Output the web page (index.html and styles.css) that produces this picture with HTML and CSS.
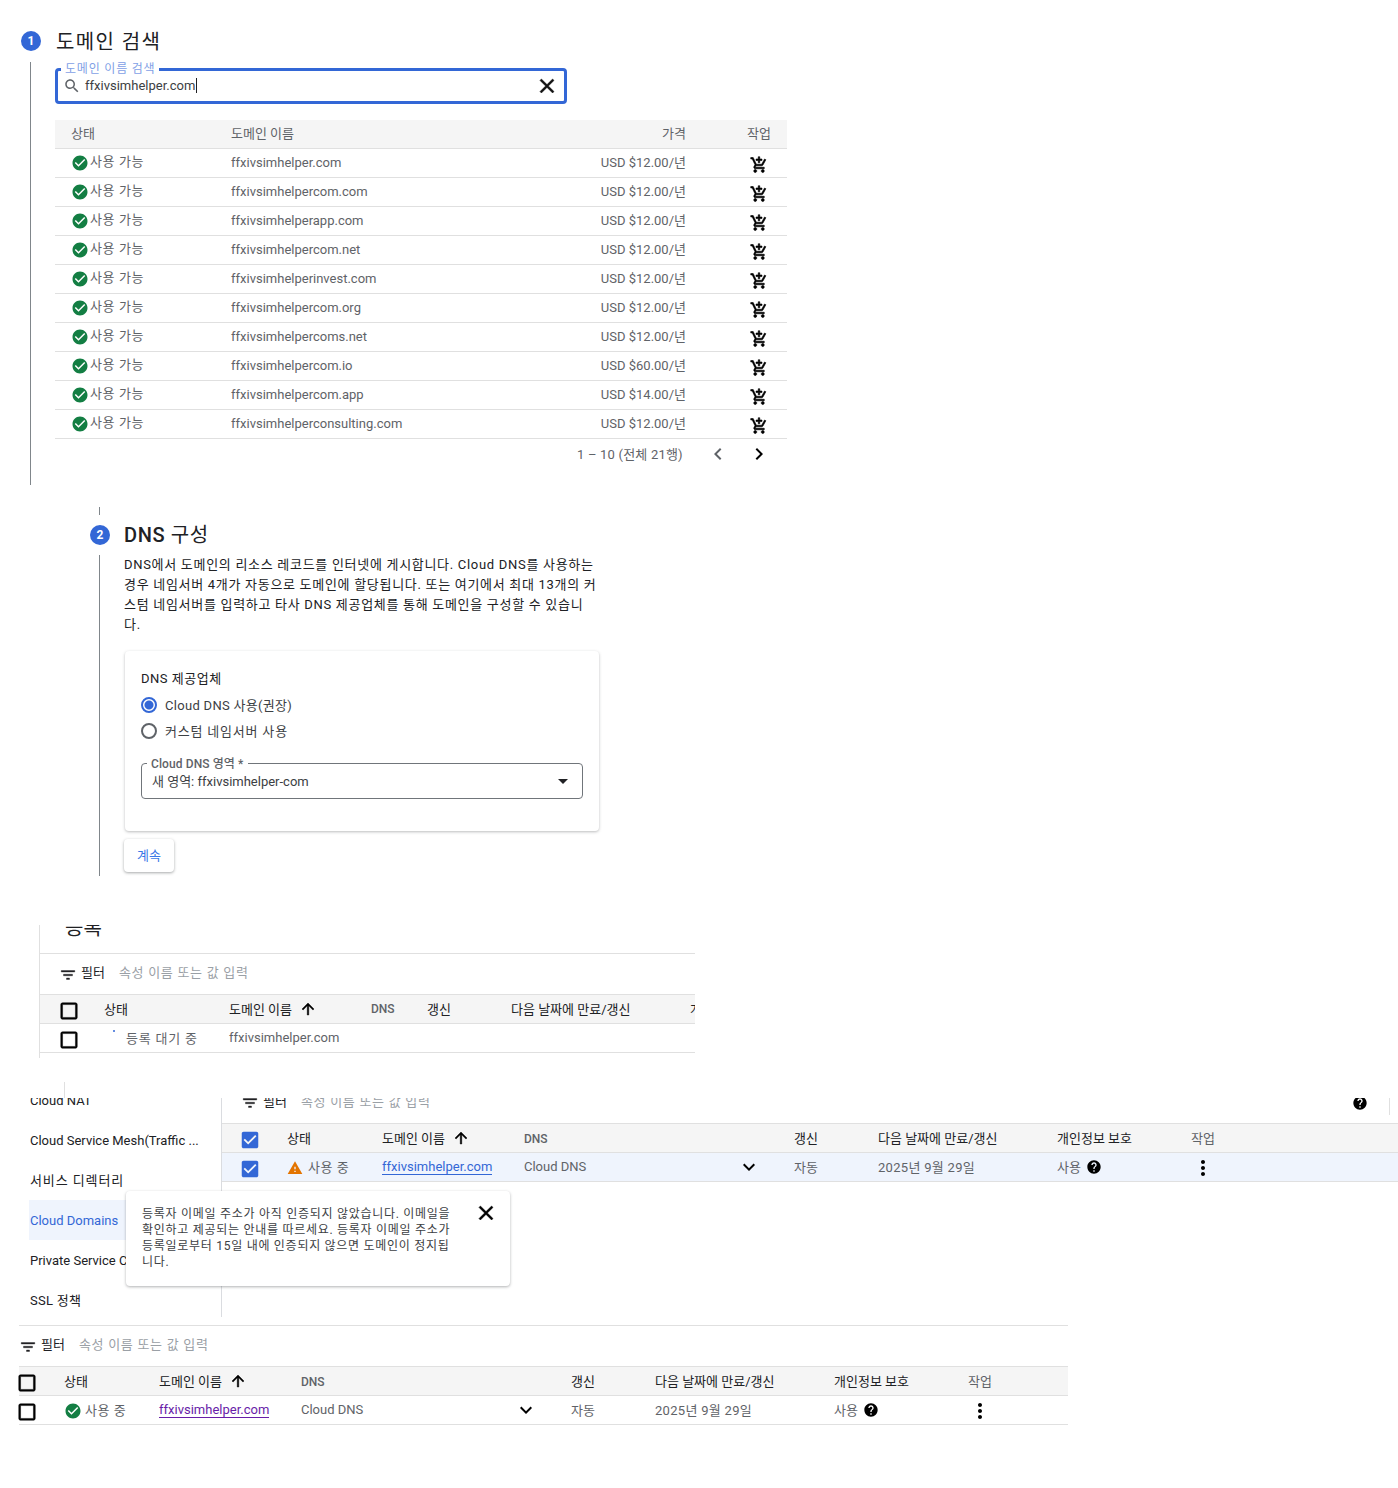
FILE: index.html
```html
<!DOCTYPE html>
<html lang="ko">
<head>
    <meta charset="UTF-8">
    <title>Cloud Domains</title>
    <link rel="stylesheet" href="styles.css">
</head>
<body>
    <svg class="sprites" xmlns="http://www.w3.org/2000/svg">
        <symbol id="i-check-circle" viewBox="0 0 24 24"><path d="M12 2C6.48 2 2 6.48 2 12s4.48 10 10 10 10-4.48 10-10S17.52 2 12 2zm-2 15l-5-5 1.41-1.41L10 14.17l7.59-7.59L19 8l-9 9z"/></symbol>
        <symbol id="i-search" viewBox="0 0 24 24"><path d="M15.5 14h-.79l-.28-.27C15.41 12.59 16 11.11 16 9.5 16 5.91 13.09 3 9.5 3S3 5.91 3 9.5 5.91 16 9.5 16c1.61 0 3.09-.59 4.23-1.57l.27.28v.79l5 4.99L20.49 19l-4.99-5zm-6 0C7.01 14 5 11.99 5 9.5S7.01 5 9.5 5 14 7.01 14 9.5 11.99 14 9.5 14z"/></symbol>
        <symbol id="i-close" viewBox="0 0 24 24"><path d="M19 6.41L17.59 5 12 10.59 6.41 5 5 6.41 10.59 12 5 17.59 6.41 19 12 13.41 17.59 19 19 17.59 13.41 12z"/></symbol>
        <symbol id="i-cart" viewBox="0 0 24 24"><path d="M11 9h2V6h3V4h-3V1h-2v3H8v2h3v3zm-4 9c-1.1 0-1.99.9-1.99 2S5.9 22 7 22s2-.9 2-2-.9-2-2-2zm10 0c-1.1 0-1.99.9-1.99 2s.89 2 1.99 2 2-.9 2-2-.9-2-2-2zm-9.83-3.25l.03-.12.9-1.63h7.45c.75 0 1.41-.41 1.75-1.03l3.86-7.01L19.42 4h-.01l-1.1 2-2.76 5H8.53l-.13-.27L6.16 6l-.95-2-.94-2H1v2h2l3.6 7.59-1.35 2.45c-.16.28-.25.61-.25.96 0 1.1.9 2 2 2h12v-2H7.42c-.13 0-.25-.11-.25-.25z"/></symbol>
        <symbol id="i-left" viewBox="0 0 24 24"><path d="M15.41 7.41L14 6l-6 6 6 6 1.41-1.41L10.83 12z"/></symbol>
        <symbol id="i-right" viewBox="0 0 24 24"><path d="M10 6L8.59 7.41 13.17 12l-4.58 4.59L10 18l6-6z"/></symbol>
        <symbol id="i-filter" viewBox="0 0 24 24"><path d="M10 18h4v-2h-4v2zM3 6v2h18V6H3zm3 7h12v-2H6v2z"/></symbol>
        <symbol id="i-up" viewBox="0 0 24 24"><path d="M4 12l1.41 1.41L11 7.83V20h2V7.83l5.58 5.59L20 12l-8-8-8 8z"/></symbol>
        <symbol id="i-down" viewBox="0 0 24 24"><path d="M16.59 8.59L12 13.17 7.41 8.59 6 10l6 6 6-6z"/></symbol>
        <symbol id="i-more" viewBox="0 0 24 24"><path d="M12 8c1.1 0 2-.9 2-2s-.9-2-2-2-2 .9-2 2 .9 2 2 2zm0 2c-1.1 0-2 .9-2 2s.9 2 2 2 2-.9 2-2-.9-2-2-2zm0 6c-1.1 0-2 .9-2 2s.9 2 2 2 2-.9 2-2-.9-2-2-2z"/></symbol>
        <symbol id="i-help" viewBox="0 0 24 24"><path d="M12 2C6.48 2 2 6.48 2 12s4.48 10 10 10 10-4.48 10-10S17.52 2 12 2zm1 17h-2v-2h2v2zm2.07-7.75l-.9.92C13.45 12.9 13 13.5 13 15h-2v-.5c0-1.1.45-2.1 1.17-2.83l1.24-1.26c.37-.36.59-.86.59-1.41 0-1.1-.9-2-2-2s-2 .9-2 2H8c0-2.21 1.79-4 4-4s4 1.79 4 4c0 .88-.36 1.68-.93 2.25z"/></symbol>
        <symbol id="i-warning" viewBox="0 0 24 24"><path d="M1 21h22L12 2 1 21zm12-3h-2v-2h2v2zm0-4h-2v-4h2v4z"/></symbol>
        <symbol id="i-box" viewBox="0 0 24 24"><path d="M19 5v14H5V5h14m0-2H5c-1.1 0-2 .9-2 2v14c0 1.1.9 2 2 2h14c1.1 0 2-.9 2-2V5c0-1.1-.9-2-2-2z"/></symbol>
        <symbol id="i-box-on" viewBox="0 0 24 24"><path d="M19 3H5c-1.11 0-2 .9-2 2v14c0 1.1.89 2 2 2h14c1.11 0 2-.9 2-2V5c0-1.1-.89-2-2-2zm-9 14l-5-5 1.41-1.41L10 14.17l7.59-7.59L19 8l-9 9z"/></symbol>
    </svg>

    <!-- 1. 도메인 검색 -->
    <section class="step-search">
        <div class="step-head">
            <span class="badge">1</span>
            <h2 class="step-title title-wide">도메인 검색</h2>
        </div>
        <div class="step-body">
            <div class="search-box">
                <span class="search-label">도메인 이름 검색</span>
                <svg class="ico search-ico"><use href="#i-search"/></svg>
                <span class="search-value">ffxivsimhelper.com</span>
                <svg class="ico close-ico"><use href="#i-close"/></svg>
            </div>
            <div class="results">
                <div class="res-row res-head"><span>상태</span><span>도메인 이름</span><span class="price">가격</span><span class="res-action">작업</span></div>
                <div class="res-row"><span class="avail"><svg class="ico ok"><use href="#i-check-circle"/></svg>사용 가능</span><span>ffxivsimhelper.com</span><span class="price">USD $12.00/년</span><svg class="ico cart"><use href="#i-cart"/></svg></div>
                <div class="res-row"><span class="avail"><svg class="ico ok"><use href="#i-check-circle"/></svg>사용 가능</span><span>ffxivsimhelpercom.com</span><span class="price">USD $12.00/년</span><svg class="ico cart"><use href="#i-cart"/></svg></div>
                <div class="res-row"><span class="avail"><svg class="ico ok"><use href="#i-check-circle"/></svg>사용 가능</span><span>ffxivsimhelperapp.com</span><span class="price">USD $12.00/년</span><svg class="ico cart"><use href="#i-cart"/></svg></div>
                <div class="res-row"><span class="avail"><svg class="ico ok"><use href="#i-check-circle"/></svg>사용 가능</span><span>ffxivsimhelpercom.net</span><span class="price">USD $12.00/년</span><svg class="ico cart"><use href="#i-cart"/></svg></div>
                <div class="res-row"><span class="avail"><svg class="ico ok"><use href="#i-check-circle"/></svg>사용 가능</span><span>ffxivsimhelperinvest.com</span><span class="price">USD $12.00/년</span><svg class="ico cart"><use href="#i-cart"/></svg></div>
                <div class="res-row"><span class="avail"><svg class="ico ok"><use href="#i-check-circle"/></svg>사용 가능</span><span>ffxivsimhelpercom.org</span><span class="price">USD $12.00/년</span><svg class="ico cart"><use href="#i-cart"/></svg></div>
                <div class="res-row"><span class="avail"><svg class="ico ok"><use href="#i-check-circle"/></svg>사용 가능</span><span>ffxivsimhelpercoms.net</span><span class="price">USD $12.00/년</span><svg class="ico cart"><use href="#i-cart"/></svg></div>
                <div class="res-row"><span class="avail"><svg class="ico ok"><use href="#i-check-circle"/></svg>사용 가능</span><span>ffxivsimhelpercom.io</span><span class="price">USD $60.00/년</span><svg class="ico cart"><use href="#i-cart"/></svg></div>
                <div class="res-row"><span class="avail"><svg class="ico ok"><use href="#i-check-circle"/></svg>사용 가능</span><span>ffxivsimhelpercom.app</span><span class="price">USD $14.00/년</span><svg class="ico cart"><use href="#i-cart"/></svg></div>
                <div class="res-row"><span class="avail"><svg class="ico ok"><use href="#i-check-circle"/></svg>사용 가능</span><span>ffxivsimhelperconsulting.com</span><span class="price">USD $12.00/년</span><svg class="ico cart"><use href="#i-cart"/></svg></div>
                <div class="pager">
                    <span class="pager-text">1 – 10 (전체 21행)</span>
                    <svg class="ico pager-prev"><use href="#i-left"/></svg>
                    <svg class="ico pager-next"><use href="#i-right"/></svg>
                </div>
            </div>
        </div>
    </section>

    <!-- 2. DNS 구성 -->
    <section class="step-dns">
        <div class="tick"></div>
        <div class="step-head">
            <span class="badge">2</span>
            <h2 class="step-title"><span class="title-latin">DNS</span> 구성</h2>
        </div>
        <div class="step-body">
            <p class="dns-desc">DNS에서 도메인의 리소스 레코드를 인터넷에 게시합니다. Cloud DNS를 사용하는 경우 네임서버 4개가 자동으로 도메인에 할당됩니다. 또는 여기에서 최대 13개의 커스텀 네임서버를 입력하고 타사 DNS 제공업체를 통해 도메인을 구성할 수 있습니다.</p>
            <div class="dns-card">
                <div class="dns-label">DNS 제공업체</div>
                <div class="radio-row"><span class="radio radio-on"></span>Cloud DNS 사용(권장)</div>
                <div class="radio-row radio-custom"><span class="radio"></span>커스텀 네임서버 사용</div>
                <div class="zone-select">
                    <span class="zone-label">Cloud DNS 영역 *</span>
                    <span class="zone-value">새 영역: ffxivsimhelper-com</span>
                    <span class="caret"></span>
                </div>
            </div>
            <button class="continue">계속</button>
        </div>
    </section>

    <!-- 등록 대기 중 -->
    <section class="pending">
        <div class="pending-title"><span>등록</span></div>
        <div class="filter-bar">
            <svg class="ico filter-ico"><use href="#i-filter"/></svg>
            <span class="filter-name">필터</span>
            <span class="filter-hint">속성 이름 또는 값 입력</span>
        </div>
        <div class="pend-row pend-head">
            <svg class="ico box"><use href="#i-box"/></svg>
            <span>상태</span>
            <span class="sort-col">도메인 이름<svg class="ico sort-ico"><use href="#i-up"/></svg></span>
            <span class="col-dns">DNS</span>
            <span>갱신</span>
            <span>다음 날짜에 만료/갱신</span>
            <span>개인정보 보호</span>
        </div>
        <div class="pend-row">
            <svg class="ico box"><use href="#i-box"/></svg>
            <span class="pend-status"><i class="spin-dot"></i>등록 대기 중</span>
            <span class="cell-grey">ffxivsimhelper.com</span>
        </div>
    </section>

    <!-- 사이드 메뉴 + 경고 -->
    <section class="console">
        <div class="tick tick-console"></div>
        <div class="console-main">
            <nav class="side-nav">
                <a class="nav-item nav-first">Cloud NAT</a>
                <a class="nav-item">Cloud Service Mesh(Traffic ...</a>
                <a class="nav-item nav-ko">서비스 디렉터리</a>
                <a class="nav-item nav-active">Cloud Domains</a>
                <a class="nav-item">Private Service Connect</a>
                <a class="nav-item nav-ssl">SSL 정책</a>
            </nav>
            <div class="console-right">
                <div class="filter-bar filter-clipped">
                    <svg class="ico filter-ico"><use href="#i-filter"/></svg>
                    <span class="filter-name">필터</span>
                    <span class="filter-hint">속성 이름 또는 값 입력</span>
                    <svg class="ico help-top"><use href="#i-help"/></svg>
                    <span class="help-rule"></span>
                </div>
                <div class="dom-row dom-head dom-inset">
                    <svg class="ico box box-on"><use href="#i-box-on"/></svg>
                    <span>상태</span>
                    <span class="sort-col">도메인 이름<svg class="ico sort-ico"><use href="#i-up"/></svg></span>
                    <span class="col-dns">DNS</span>
                    <span>갱신</span>
                    <span>다음 날짜에 만료/갱신</span>
                    <span>개인정보 보호</span>
                    <span class="col-action">작업</span>
                </div>
                <div class="dom-row dom-inset dom-selected">
                    <svg class="ico box box-on"><use href="#i-box-on"/></svg>
                    <span class="use-status"><svg class="ico warn"><use href="#i-warning"/></svg>사용 중</span>
                    <a class="dom-link">ffxivsimhelper.com</a>
                    <span class="cell-dns">Cloud DNS<svg class="ico chev"><use href="#i-down"/></svg></span>
                    <span>자동</span>
                    <span class="date">2025년 9월 29일</span>
                    <span class="privacy">사용<svg class="ico help"><use href="#i-help"/></svg></span>
                    <svg class="ico more"><use href="#i-more"/></svg>
                </div>
            </div>
        </div>
        <div class="notice">
            <p>등록자 이메일 주소가 아직 인증되지 않았습니다. 이메일을 확인하고 제공되는 안내를 따르세요. 등록자 이메일 주소가 등록일로부터 15일 내에 인증되지 않으면 도메인이 정지됩니다.</p>
            <svg class="ico notice-close"><use href="#i-close"/></svg>
        </div>
    </section>

    <!-- 사용 중 -->
    <section class="active-list">
        <div class="filter-bar">
            <svg class="ico filter-ico"><use href="#i-filter"/></svg>
            <span class="filter-name">필터</span>
            <span class="filter-hint">속성 이름 또는 값 입력</span>
        </div>
        <div class="dom-row dom-head">
            <svg class="ico box"><use href="#i-box"/></svg>
            <span>상태</span>
            <span class="sort-col">도메인 이름<svg class="ico sort-ico"><use href="#i-up"/></svg></span>
            <span class="col-dns">DNS</span>
            <span>갱신</span>
            <span>다음 날짜에 만료/갱신</span>
            <span>개인정보 보호</span>
            <span class="col-action">작업</span>
        </div>
        <div class="dom-row">
            <svg class="ico box"><use href="#i-box"/></svg>
            <span class="use-status"><svg class="ico ok"><use href="#i-check-circle"/></svg>사용 중</span>
            <a class="dom-link dom-visited">ffxivsimhelper.com</a>
            <span class="cell-dns">Cloud DNS<svg class="ico chev"><use href="#i-down"/></svg></span>
            <span>자동</span>
            <span class="date">2025년 9월 29일</span>
            <span class="privacy">사용<svg class="ico help"><use href="#i-help"/></svg></span>
            <svg class="ico more"><use href="#i-more"/></svg>
        </div>
    </section>
</body>
</html>
```

FILE: styles.css
```css
* {
    box-sizing: border-box;
}
body {
    margin: 0;
    background-color: white;
    color: #202124;
    font-family: Roboto, "Noto Sans CJK KR", sans-serif;
    font-size: 13px;
}
.sprites {
    display: none;
}
.ico {
    display: block;
    flex: none;
    width: 24px;
    height: 24px;
    fill: currentColor;
}

/* steps */
.step-head {
    display: flex;
    align-items: center;
    gap: 15px;
}
.badge {
    width: 20px;
    height: 20px;
    border-radius: 50%;
    background-color: #3367d6;
    color: white;
    font-size: 12px;
    font-weight: 700;
    text-align: center;
    line-height: 20px;
}
.step-title {
    margin: 0;
    font-size: 20px;
    font-weight: 400;
    line-height: 30px;
    letter-spacing: 0.6px;
    color: #202124;
}
.title-wide {
    height: 30px;
    padding-top: 2px;
    line-height: 28px;
    letter-spacing: 1.4px;
}
.title-latin {
    font-weight: 500;
}
.tick {
    width: 1px;
    height: 8px;
    background-color: #80868b;
}

/* 1. search */
.step-search {
    height: 459px;
    margin-top: 26px;
    margin-left: 21px;
}
.step-search .step-body {
    height: 423px;
    margin-left: 9px;
    margin-top: 6px;
    padding-top: 6px;
    padding-left: 24px;
    border-left: 1px solid #80868b;
}
.search-box {
    position: relative;
    display: flex;
    align-items: center;
    width: 512px;
    height: 36px;
    padding: 0 7px 0 5px;
    border: 3px solid #3367d6;
    border-radius: 4px;
}
.search-label {
    position: absolute;
    top: -9px;
    left: 3px;
    padding: 0 4px;
    background-color: white;
    color: #7f9fe6;
    font-size: 12px;
    letter-spacing: 0.8px;
    line-height: 14px;
}
.search-ico {
    width: 18px;
    height: 18px;
    color: #5f6368;
}
.search-value {
    flex: 1;
    margin-left: 4px;
    margin-bottom: 2px;
    font-size: 13px;
    color: #3c4043;
}
.search-value::after {
    content: "";
    display: inline-block;
    width: 1px;
    height: 15px;
    margin-left: 1px;
    vertical-align: -3px;
    background-color: #202124;
}
.close-ico {
    margin-right: -2px;
    color: #111;
    stroke: currentColor;
    stroke-width: 0.5;
}
.results {
    width: 732px;
    margin-top: 16px;
}
.res-row {
    display: grid;
    grid-template-columns: 160px 1fr 120px 101px;
    align-items: center;
    height: 29px;
    padding-left: 16px;
    padding-bottom: 3px;
    border-bottom: 1px solid #e0e0e0;
    color: #5f6368;
}
.res-row:not(.res-head) > span:nth-child(2) {
    margin-top: 2px;
}
.res-head {
    background-color: #f5f5f5;
}
.price {
    text-align: right;
}
.res-action {
    text-align: right;
    padding-right: 16px;
}
.avail {
    display: flex;
    align-items: center;
    padding-bottom: 2px;
    letter-spacing: 0.6px;
}
.ok {
    width: 18px;
    height: 18px;
    color: #137e43;
}
.avail .ok {
    margin-top: 5px;
    margin-right: 1px;
}
.cart {
    width: 18px;
    height: 18px;
    margin-left: 64px;
    margin-top: 7px;
    color: #000;
    stroke: currentColor;
    stroke-width: 0.8;
}
.pager {
    display: flex;
    align-items: center;
    height: 30px;
    color: #5f6368;
}
.pager-text {
    margin-left: 522px;
    margin-bottom: 2px;
    width: 124px;
    letter-spacing: 0.2px;
}
.pager-prev {
    color: #5f6368;
    margin-left: 5px;
}
.pager-next {
    color: #000;
    margin-left: 17px;
}

/* 2. dns */
.step-dns {
    height: 391px;
    margin-top: 22px;
    margin-left: 90px;
}
.step-dns .tick {
    margin-left: 9px;
}
.step-dns .step-head {
    gap: 14px;
    margin-top: 5px;
}
.step-dns .step-body {
    height: 321px;
    margin-left: 9px;
    margin-top: 5px;
    padding-left: 24px;
    border-left: 1px solid #80868b;
}
.dns-desc {
    width: 476px;
    margin: 0;
    font-size: 13px;
    letter-spacing: 0.7px;
    line-height: 20px;
    color: #202124;
}
.dns-card {
    width: 474px;
    height: 180px;
    margin-top: 16px;
    margin-left: 1px;
    padding: 18px 16px;
    border-radius: 4px;
    box-shadow: 0 1px 3px rgba(60, 64, 67, 0.35);
}
.dns-label {
    line-height: 20px;
    margin-bottom: 2px;
    letter-spacing: 0.5px;
}
.radio-row {
    display: flex;
    align-items: center;
    gap: 8px;
    height: 26px;
    color: #3c4043;
    letter-spacing: 0.3px;
}
.radio-custom {
    letter-spacing: 0.8px;
}
.radio {
    width: 16px;
    height: 16px;
    margin-top: 1px;
    border: 2px solid #5f6368;
    border-radius: 50%;
}
.radio-on {
    border-color: #3367d6;
    background: radial-gradient(circle, #3367d6 4px, white 5px);
}
.zone-select {
    position: relative;
    display: flex;
    align-items: center;
    justify-content: space-between;
    width: 442px;
    height: 36px;
    margin-top: 20px;
    padding: 0 14px 0 10px;
    border: 1px solid #70757a;
    border-radius: 4px;
    color: #3c4043;
}
.zone-value {
    margin-bottom: 2px;
}
.zone-label {
    position: absolute;
    top: -7px;
    left: 5px;
    padding: 0 4px;
    background-color: white;
    font-size: 12px;
    font-weight: 500;
    letter-spacing: 0.1px;
    line-height: 14px;
    color: #5f6368;
}
.caret {
    width: 0;
    height: 0;
    border-left: 5px solid transparent;
    border-right: 5px solid transparent;
    border-top: 5px solid #202124;
}
.continue {
    display: block;
    width: 50px;
    height: 33px;
    margin-top: 8px;
    padding: 0 0 3px;
    border: none;
    border-radius: 4px;
    background-color: white;
    color: #3b78e7;
    font-family: inherit;
    font-size: 13px;
    box-shadow: 0 1px 3px rgba(60, 64, 67, 0.45);
}

/* 등록 대기 중 */
.pending {
    width: 656px;
    height: 133px;
    margin-top: 27px;
    margin-left: 39px;
    border-left: 1px solid #e0e0e0;
    overflow: hidden;
}
.pending-title {
    height: 29px;
    padding-left: 25px;
    border-bottom: 1px solid #e0e0e0;
    font-size: 20px;
    overflow: hidden;
}
.pending-title span {
    display: block;
    margin-top: -12px;
    line-height: 30px;
}
.filter-bar {
    position: relative;
    display: flex;
    align-items: center;
    height: 40px;
    padding-bottom: 5px;
}
.filter-ico {
    width: 18px;
    height: 18px;
    margin-left: 19px;
    margin-top: 6px;
    stroke: currentColor;
    stroke-width: 0.5;
}
.filter-name {
    margin-left: 4px;
}
.filter-hint {
    margin-left: 14px;
    color: #9aa0a6;
    letter-spacing: 0.7px;
}
.pend-row {
    display: grid;
    grid-template-columns: 46px 125px 142px 56px 84px 179px 120px;
    align-items: center;
    height: 29px;
    padding-left: 18px;
    padding-bottom: 3px;
    border-bottom: 1px solid #e0e0e0;
    white-space: nowrap;
}
.pend-head {
    height: 30px;
    background-color: #f5f5f5;
    border-top: 1px solid #e0e0e0;
}
.box {
    width: 22px;
    height: 22px;
    margin-top: 5px;
    color: #000;
    stroke: currentColor;
    stroke-width: 0.5;
}
.box-on {
    color: #3367d6;
    stroke: none;
}
.sort-col {
    display: flex;
    align-items: center;
    gap: 7px;
}
.sort-ico {
    width: 18px;
    height: 18px;
    color: #000;
    stroke: currentColor;
    stroke-width: 0.6;
}
.col-dns {
    font-weight: 500;
    font-size: 12px;
    color: #5f6368;
}
.pend-status {
    position: relative;
    padding-left: 22px;
    color: #5f6368;
    letter-spacing: 0.8px;
}
.spin-dot {
    position: absolute;
    top: 2px;
    left: 9px;
    width: 2px;
    height: 2px;
    border-radius: 50%;
    background-color: #3367d6;
}
.cell-grey {
    color: #5f6368;
}

/* 사이드 메뉴 */
.console {
    position: relative;
    height: 236px;
    margin-top: 24px;
}
.tick-console {
    height: 16px;
    margin-left: 64px;
    background-color: #e0e0e0;
}
.console-main {
    display: flex;
    height: 219px;
}
.side-nav {
    flex: none;
    width: 222px;
    border-right: 1px solid #dadce0;
    overflow: hidden;
}
.nav-item {
    display: flex;
    align-items: center;
    height: 40px;
    margin-left: 29px;
    padding-left: 1px;
    color: #202124;
    white-space: nowrap;
}
.nav-first {
    margin-top: -18px;
}
.nav-ko {
    padding-bottom: 2px;
    letter-spacing: 0.9px;
}
.nav-ssl {
    padding-bottom: 2px;
    letter-spacing: 0.3px;
}
.nav-active {
    background-color: #eff4fd;
    color: #3367d6;
}
.console-right {
    flex: 1;
    min-width: 0;
}
.filter-clipped {
    align-items: flex-start;
    height: 25px;
    padding-bottom: 0;
    overflow: hidden;
}
.filter-clipped .filter-name,
.filter-clipped .filter-hint {
    margin-top: -4px;
    line-height: 16px;
}
.filter-clipped .filter-ico {
    margin-top: -4px;
}
.help-top {
    position: absolute;
    top: -3px;
    right: 30px;
    width: 16px;
    height: 16px;
    color: #000;
}
.help-rule {
    position: absolute;
    top: 0;
    right: 8px;
    width: 1px;
    height: 17px;
    background-color: #e0e0e0;
}
.dom-row {
    display: grid;
    grid-template-columns: 45px 95px 142px 270px 84px 179px 134px 1fr;
    align-items: center;
    height: 29px;
    padding-bottom: 3px;
    border-bottom: 1px solid #e0e0e0;
    color: #5f6368;
    white-space: nowrap;
}
.dom-head {
    height: 30px;
    border-top: 1px solid #e0e0e0;
    background-color: #f5f5f5;
    color: #202124;
}
.dom-head .col-dns {
    margin-top: 3px;
}
.dom-inset {
    padding-left: 20px;
}
.dom-selected {
    background-color: #eff4fd;
}
.dom-row .box {
    margin-left: -3px;
}
.col-action {
    color: #5f6368;
}
.use-status {
    display: flex;
    align-items: center;
    gap: 5px;
    letter-spacing: 0.5px;
}
.warn {
    width: 16px;
    height: 16px;
    margin-top: 3px;
    color: #e37400;
}
.use-status .ok {
    margin-top: 2px;
    margin-right: -2px;
}
.dom-link {
    justify-self: start;
    color: #3367d6;
    border-bottom: 1px solid #3367d6;
    line-height: 15px;
}
.dom-visited {
    color: #681da8;
    border-bottom-color: #681da8;
}
.cell-dns {
    display: flex;
    align-items: center;
    justify-content: space-between;
    padding-right: 33px;
}
.chev {
    color: #000;
}
.date {
    letter-spacing: 0.3px;
}
.privacy {
    display: flex;
    align-items: center;
    gap: 5px;
}
.help {
    width: 16px;
    height: 16px;
    color: #000;
}
.more {
    margin-top: 3px;
    color: #000;
}
.notice {
    position: absolute;
    top: 109px;
    left: 126px;
    display: flex;
    justify-content: space-between;
    width: 384px;
    height: 95px;
    padding: 15px 12px 0 16px;
    border-radius: 4px;
    background-color: white;
    box-shadow: 0 1px 3px rgba(60, 64, 67, 0.4);
}
.notice p {
    width: 312px;
    margin: 0;
    font-size: 12px;
    letter-spacing: 0.72px;
    line-height: 16px;
    color: #3c4043;
}
.notice-close {
    margin-top: -5px;
    color: #000;
    stroke: currentColor;
    stroke-width: 0.5;
}

/* 사용 중 */
.active-list {
    width: 1049px;
    margin-left: 19px;
    margin-top: 7px;
    border-top: 1px solid #e0e0e0;
}
.active-list .filter-ico {
    margin-left: 0;
}
```
